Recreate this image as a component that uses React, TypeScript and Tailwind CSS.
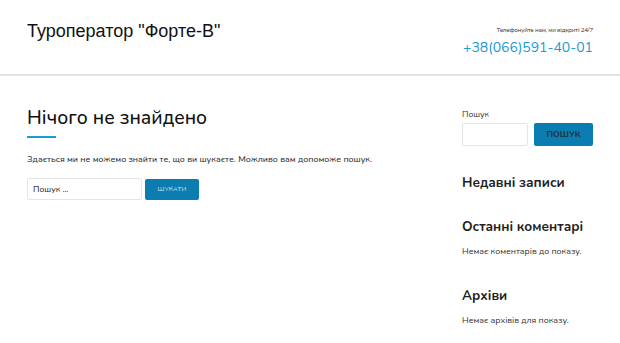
export default function App() {
  const font = { fontFamily: '"Nunito", "Lato", "Noto Sans", sans-serif' };
  return (
    <div className="w-[620px] h-[343px] bg-white overflow-hidden text-[#222]" style={font}>
      <header className="h-[76px] border-b-2 border-[#e3e3e3] px-[27px] flex justify-between">
        <div className="pt-[20px] text-[18px] leading-[22px] text-[#111]" style={{ fontFamily: '"Liberation Sans", Arial, sans-serif' }}>
          Туроператор "Форте-В"
        </div>
        <div className="pt-[26px] flex flex-col items-end">
          <div className="text-[6.3px] leading-[9px] text-[#333] tracking-[-0.2px]">Телефонуйте нам, ми відкриті 24/7</div>
          <div className="text-[14px] leading-[18px] mt-[4px] text-[#1a9ad6]">+38(066)591-40-01</div>
        </div>
      </header>
      <div className="px-[27px] flex">
        <main className="w-[413px] pt-[30px]">
          <h1 className="text-[19.3px] leading-[24px] font-medium text-[#111]">Нічого не знайдено</h1>
          <div className="w-[29px] h-[2px] bg-[#1a9ad6] mt-[6px]" />
          <p className="text-[8.8px] leading-[12px] font-medium text-[#333] mt-[15px]">
            Здається ми не можемо знайти те, що ви шукаєте. Можливо вам допоможе пошук.
          </p>
          <div className="flex items-center gap-[3px] mt-[13px]">
            <div className="w-[115px] h-[22px] border border-[#e5e5e5] rounded-[2px] flex items-center px-[5px] text-[8.5px] font-medium text-[#333]">
              Пошук ...
            </div>
            <div className="w-[54px] h-[21px] bg-[#0b7db1] rounded-[2px] flex items-center justify-center text-[6.5px] text-[#cfe6f2] tracking-wide">
              ШУКАТИ
            </div>
          </div>
        </main>
        <aside className="ml-[22px] w-[131px] pt-[33px]">
          <div className="text-[8.5px] leading-[11px] text-[#333]">Пошук</div>
          <div className="flex gap-[6px] mt-[3px]">
            <div className="w-[66px] h-[23px] border border-[#e5e5e5] rounded-[2px]" />
            <div className="w-[59px] h-[23px] bg-[#0b7db1] rounded-[2px] flex items-center justify-center text-[8.5px] font-extrabold text-[#1d3a4a]">
              ПОШУК
            </div>
          </div>
          <h2 className="text-[13.5px] leading-[18px] font-bold text-[#222] mt-[28px]">Недавні записи</h2>
          <h2 className="text-[13.5px] leading-[18px] font-bold text-[#222] mt-[26px]">Останні коментарі</h2>
          <p className="text-[8.8px] leading-[12px] text-[#333] mt-[9px]">Немає коментарів до показу.</p>
          <h2 className="text-[13.5px] leading-[18px] font-bold text-[#222] mt-[30px]">Архіви</h2>
          <p className="text-[8.8px] leading-[12px] text-[#333] mt-[9px]">Немає архівів для показу.</p>
        </aside>
      </div>
    </div>
  );
}
